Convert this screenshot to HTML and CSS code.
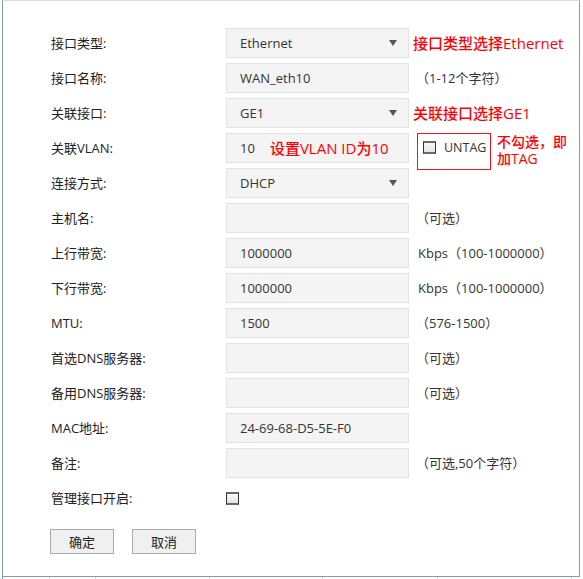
FILE: index.html
```html
<!DOCTYPE html>
<html lang="zh">
<head>
<meta charset="utf-8">
<title>接口设置</title>
<link rel="stylesheet" href="styles.css">
</head>
<body>
<div class="frame">
  <div class="form">
    <div class="row">
      <span class="lbl">接口类型:</span>
      <div class="field"><span>Ethernet</span><span class="caret"></span></div>
      <span class="note">接口类型选择Ethernet</span>
    </div>
    <div class="row">
      <span class="lbl">接口名称:</span>
      <div class="field"><span>WAN_eth10</span></div>
      <span class="hint paren">（1-12个字符）</span>
    </div>
    <div class="row">
      <span class="lbl">关联接口:</span>
      <div class="field"><span>GE1</span><span class="caret"></span></div>
      <span class="note">关联接口选择GE1</span>
    </div>
    <div class="row">
      <span class="lbl">关联VLAN:</span>
      <div class="field field-start"><span>10</span><span class="note inbox">设置VLAN ID为10</span></div>
      <div class="untag">
        <div class="untag-in"><span class="chk"></span><span class="untag-txt">UNTAG</span></div>
      </div>
      <span class="note note2">不勾选，即<br>加TAG</span>
    </div>
    <div class="row">
      <span class="lbl">连接方式:</span>
      <div class="field"><span>DHCP</span><span class="caret"></span></div>
    </div>
    <div class="row">
      <span class="lbl">主机名:</span>
      <div class="field"></div>
      <span class="hint paren">（可选）</span>
    </div>
    <div class="row">
      <span class="lbl">上行带宽:</span>
      <div class="field"><span>1000000</span></div>
      <span class="hint">Kbps（100-1000000）</span>
    </div>
    <div class="row">
      <span class="lbl">下行带宽:</span>
      <div class="field"><span>1000000</span></div>
      <span class="hint">Kbps（100-1000000）</span>
    </div>
    <div class="row">
      <span class="lbl">MTU:</span>
      <div class="field"><span>1500</span></div>
      <span class="hint paren">（576-1500）</span>
    </div>
    <div class="row">
      <span class="lbl">首选DNS服务器:</span>
      <div class="field"></div>
      <span class="hint paren">（可选）</span>
    </div>
    <div class="row">
      <span class="lbl">备用DNS服务器:</span>
      <div class="field"></div>
      <span class="hint paren">（可选）</span>
    </div>
    <div class="row">
      <span class="lbl">MAC地址:</span>
      <div class="field"><span>24-69-68-D5-5E-F0</span></div>
    </div>
    <div class="row">
      <span class="lbl">备注:</span>
      <div class="field"></div>
      <span class="hint paren">（可选,50个字符）</span>
    </div>
    <div class="row">
      <span class="lbl">管理接口开启:</span>
      <span class="chk"></span>
    </div>
    <div class="buttons">
      <button class="btn" type="button">确定</button>
      <button class="btn" type="button">取消</button>
    </div>
  </div>
</div>
<div class="ticks">
  <span class="tick t1"></span>
  <span class="tick t2"></span>
  <span class="tick t3"></span>
  <span class="tick t4"></span>
  <span class="tick t5"></span>
  <span class="tick t6"></span>
  <span class="tick t7"></span>
</div>
</body>
</html>
```

FILE: styles.css
```css
html, body {
  margin: 0;
  padding: 0;
  background: #fff;
}
body {
  font-family: "Open Sans", "Noto Sans CJK SC", sans-serif;
  font-size: 13px;
  color: #333;
}
.frame {
  margin-left: 2px;
  width: 578px;
  height: 577px;
  box-sizing: border-box;
  border-top: 1px solid #dcdcdc;
  border-left: 1px solid #7f9db9;
  border-right: 1px solid #7f9db9;
  border-bottom: 1px solid #7f9db9;
}
.form {
  padding: 27px 0 0 48px;
}
.row {
  display: flex;
  align-items: center;
  height: 30px;
  margin-bottom: 5px;
  line-height: 18px;
}
.lbl {
  width: 175px;
  flex: none;
  color: #222;
  white-space: nowrap;
  margin-top: -1px;
}
.field {
  width: 183px;
  height: 30px;
  flex: none;
  box-sizing: border-box;
  border: 1px solid #e3e3e3;
  background: #f4f4f4;
  padding: 0 11px 0 13px;
  display: flex;
  align-items: center;
  justify-content: space-between;
  color: #333;
  white-space: nowrap;
}
.field > span:first-child {
  margin-top: -1px;
}
.field-start {
  justify-content: flex-start;
}
.caret {
  width: 0;
  height: 0;
  border-left: 4.5px solid transparent;
  border-right: 4.5px solid transparent;
  border-top: 6px solid #555;
}
.note {
  margin-left: 4px;
  color: #f00;
  font-size: 15px;
  font-weight: 500;
  white-space: nowrap;
  margin-top: -1px;
}
.note.inbox {
  margin-left: 15px;
}
.hint {
  margin-left: 9px;
  color: #333;
  white-space: nowrap;
}
.hint.paren {
  margin-left: 7px;
}
.untag {
  align-self: flex-start;
  margin-left: 8px;
  width: 74px;
  height: 37px;
  flex: none;
  box-sizing: border-box;
  border: 1px solid #e8161c;
  padding: 7px 0 0 5px;
}
.untag-in {
  display: flex;
  align-items: center;
  height: 13px;
}
.untag-txt {
  margin-left: 8px;
  color: #333;
  font-size: 12.5px;
  line-height: 13px;
}
.note2 {
  align-self: flex-start;
  margin-left: 6px;
  margin-top: 0;
  font-size: 14px;
  line-height: 17px;
}
.chk {
  display: inline-block;
  width: 13px;
  height: 13px;
  flex: none;
  box-sizing: border-box;
  border-left: 1px solid #333;
  border-right: 1px solid #333;
  border-top: 2px solid #6a6a6a;
  border-bottom: 2px solid #6a6a6a;
  background: linear-gradient(#f8f8f8, #e4e4e4);
}
.buttons {
  display: flex;
  gap: 18px;
  margin-top: 16px;
  margin-left: -1px;
}
.btn {
  width: 64px;
  height: 25px;
  box-sizing: border-box;
  border: 1px solid #a9a9a9;
  background: #f0f0f0;
  font-family: "Noto Sans CJK SC", sans-serif;
  font-size: 13px;
  color: #222;
  padding: 0;
  border-radius: 0;
}
.ticks {
  margin-left: 2px;
  width: 578px;
  height: 2px;
  display: flex;
}
.tick {
  height: 2px;
  box-sizing: border-box;
  border-left: 1px solid #d0d0d0;
  flex: none;
}
.t1 { width: 47px; border-left-color: #7f9db9; }
.t2 { width: 46px; }
.t3 { width: 114px; }
.t4 { width: 113px; }
.t5 { width: 115px; }
.t6 { width: 134px; }
.t7 { width: 9px; }
```
